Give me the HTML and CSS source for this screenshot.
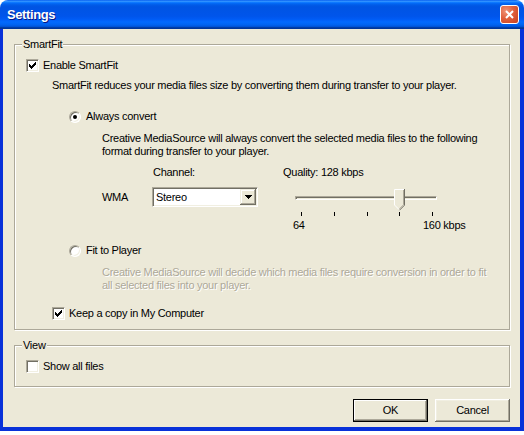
FILE: index.html
```html
<!DOCTYPE html>
<html lang="en">
<head>
  <meta charset="UTF-8" />
  <meta name="viewport" content="width=device-width, initial-scale=1.0"/>
  <title>Settings</title>
  <link rel="stylesheet" href="styles.css">
</head>
<body>

  <div class="window">
    <div class="titlebar">
      <span class="title">Settings</span>
      <button class="close" aria-label="Close">
        <svg width="9" height="9" viewBox="0 0 9 9"><path d="M1 1L8 8M8 1L1 8" stroke="#fff" stroke-width="2"/></svg>
      </button>
    </div>

    <div class="client">
      <div class="group smartfit">
        <div class="group-title">SmartFit</div>
        <label class="option">
          <span class="check"><svg width="7" height="7" viewBox="0 0 7 7"><path d="M0 2h1v3H0zM1 3h1v3H1zM2 4h1v3H2zM3 3h1v3H3zM4 2h1v3H4zM5 1h1v3H5zM6 0h1v3H6z"/></svg></span>
          Enable SmartFit
        </label>

        <div class="indent">
          <p class="note intro">SmartFit reduces your media files size by converting them during transfer to your player.</p>

          <label class="option radio-row always">
            <span class="radio on"></span>
            Always convert
          </label>
          <div class="sub">
            <p class="note convert">Creative MediaSource will always convert the selected media files to the following<br>format during transfer to your player.</p>

            <div class="format">
              <div class="channel">
                <div class="field-label channel-label">Channel:</div>
                <div class="channel-row">
                  <span class="codec">WMA</span>
                  <div class="combo">
                    <span>Stereo</span>
                    <span class="combo-btn"><svg width="7" height="4" viewBox="0 0 7 4"><path d="M0 0h7v1H0zM1 1h5v1H1zM2 2h3v1H2zM3 3h1v1H3z"/></svg></span>
                  </div>
                </div>
              </div>

              <div class="quality">
                <div class="field-label">Quality: 128 kbps</div>
                <div class="slider">
                  <div class="track"></div>
                  <svg class="thumb" width="11" height="22" viewBox="0 0 11 22">
                    <path d="M0 0H11V16L5.5 21.5L0 16Z" fill="#ece9d8"/>
                    <path d="M0.5 16V0.5H10" fill="none" stroke="#fff"/>
                    <path d="M0.5 16L5 20.5" fill="none" stroke="#fff"/>
                    <path d="M10.5 0V16.2L5.5 21.2" fill="none" stroke="#716f64"/>
                    <path d="M9.5 1V15.8L5.5 19.8" fill="none" stroke="#aca899"/>
                  </svg>
                </div>
                <div class="ticks"><i></i><i></i><i></i><i></i><i></i></div>
                <div class="scale"><span>64</span><span>160 kbps</span></div>
              </div>
            </div>
          </div>

          <label class="option radio-row fit">
            <span class="radio"></span>
            Fit to Player
          </label>
          <div class="sub">
            <p class="note disabled">Creative MediaSource will decide which media files require conversion in order to fit<br>all selected files into your player.</p>
          </div>

          <label class="option keep">
            <span class="check"><svg width="7" height="7" viewBox="0 0 7 7"><path d="M0 2h1v3H0zM1 3h1v3H1zM2 4h1v3H2zM3 3h1v3H3zM4 2h1v3H4zM5 1h1v3H5zM6 0h1v3H6z"/></svg></span>
            Keep a copy in My Computer
          </label>
        </div>
      </div>

      <div class="group view">
        <div class="group-title">View</div>
        <label class="option">
          <span class="check"></span>
          Show all files
        </label>
      </div>

      <div class="buttons">
        <button class="btn default">OK</button>
        <button class="btn">Cancel</button>
      </div>
    </div>
  </div>

</body>
</html>
```

FILE: styles.css
```css
body {
  margin: 0;
  background: #fff;
  font-family: "Liberation Sans", Arial, sans-serif;
  font-size: 11px;
  line-height: 13px;
  letter-spacing: -0.27px;
  color: #000;
}

.window {
  width: 524px;
  height: 435px;
}

/* XP caption */
.titlebar {
  height: 29px;
  box-sizing: border-box;
  display: flex;
  align-items: center;
  justify-content: space-between;
  padding: 0 5px 0 7px;
  border-radius: 8px 8px 0 0;
  background: linear-gradient(180deg, #0058ee 0%, #3593ff 4%, #288eff 6%, #127dff 8%, #036ffc 10%, #0262ee 14%, #0057e5 20%, #0054e3 24%, #0055eb 56%, #005bf5 66%, #026afe 76%, #0062ef 86%, #0052d6 92%, #0040ab 94%, #003092 100%);
}

.title {
  color: #fff;
  font-weight: bold;
  font-size: 13px;
  letter-spacing: -0.4px;
  text-shadow: 1px 1px #0a1883;
}

.close {
  width: 19px;
  height: 19px;
  padding: 0;
  box-sizing: border-box;
  border: 1px solid #fff;
  border-radius: 3px;
  background: radial-gradient(circle at 30% 30%, #f09478 0%, #e0603c 45%, #c8401e 100%);
  display: flex;
  align-items: center;
  justify-content: center;
}

.client {
  height: 402px;
  box-sizing: border-box;
  border: solid #0831d9;
  border-width: 0 4px 4px 3px;
  background: #ece9d8;
  padding: 15px 10px 0 11px;
}

/* etched group box */
.group {
  border: 1px solid #aca899;
  box-shadow: inset 1px 1px #fff, 1px 1px #fff;
  padding-left: 11px;
}

.smartfit {
  padding-bottom: 9px;
}

.view {
  margin-top: 15px;
  padding-bottom: 13px;
}

.group-title {
  width: fit-content;
  margin: -7px 0 0 -4px;
  padding: 0 1px;
  background: #ece9d8;
}

.option {
  display: flex;
  align-items: center;
  height: 13px;
  margin-top: 8px;
}

.check {
  flex: none;
  width: 13px;
  height: 13px;
  box-sizing: border-box;
  border: 1px solid;
  border-color: #aca899 #fff #fff #aca899;
  box-shadow: inset 1px 1px #716f64, inset -1px -1px #f1efe2;
  background: #fff;
  margin-right: 4px;
  display: flex;
  align-items: center;
  justify-content: center;
}

.radio {
  flex: none;
  width: 12px;
  height: 12px;
  box-sizing: border-box;
  border-radius: 50%;
  border: 1px solid;
  border-color: #aca899 #fff #fff #aca899;
  box-shadow: inset 1px 1px #716f64, inset -1px -1px #f1efe2;
  background: #fff;
  margin-right: 5px;
  display: flex;
  align-items: center;
  justify-content: center;
}

.radio.on::after {
  content: "";
  width: 4px;
  height: 4px;
  border-radius: 50%;
  background: #000;
}

.indent {
  margin-left: 26px;
}

.note {
  margin: 0;
}

.intro {
  margin-top: 7px;
}

.radio-row {
  margin-left: 17px;
}

.always {
  margin-top: 18px;
}

.sub {
  margin-left: 50px;
}

.convert {
  margin-top: 9px;
}

.format {
  display: flex;
  margin-top: 8px;
}

.channel {
  width: 181px;
}

.field-label {
  height: 13px;
}

.channel-label {
  margin-left: 51px;
}

.channel-row {
  display: flex;
  align-items: center;
  height: 20px;
  margin-top: 8px;
}

.codec {
  width: 50px;
}

.combo {
  width: 106px;
  height: 20px;
  box-sizing: border-box;
  border: 1px solid;
  border-color: #aca899 #fff #fff #aca899;
  box-shadow: inset 1px 1px #716f64, inset -1px -1px #f1efe2;
  background: #fff;
  padding: 1px 1px 1px 3px;
  display: flex;
  align-items: center;
  justify-content: space-between;
}

.combo-btn {
  width: 16px;
  height: 16px;
  background: #ece9d8;
  box-shadow: inset -1px -1px #716f64, inset 1px 1px #f1efe2, inset -2px -2px #aca899, inset 2px 2px #fff;
  display: flex;
  align-items: center;
  justify-content: center;
}

.quality {
  width: 190px;
}

.slider {
  position: relative;
  height: 25px;
  margin-top: 8px;
}

.track {
  position: absolute;
  left: 12px;
  top: 9px;
  width: 142px;
  height: 4px;
  box-sizing: border-box;
  border: 1px solid;
  border-color: #aca899 #fff #fff #aca899;
  box-shadow: inset 1px 1px #716f64;
  background: #ece9d8;
}

.thumb {
  position: absolute;
  left: 111px;
  top: 2px;
}

.ticks {
  display: flex;
  justify-content: space-between;
  width: 132px;
  height: 4px;
  margin-left: 18px;
}

.ticks i {
  width: 1px;
  height: 4px;
  background: #000;
}

.scale {
  display: flex;
  margin: 3px 0 0 10px;
}

.scale span:first-child {
  width: 130px;
}

.fit {
  margin-top: 12px;
}

.disabled {
  margin-top: 9px;
  color: #aca899;
  text-shadow: 1px 1px #fff;
}

.keep {
  margin-top: 15px;
}

.buttons {
  display: flex;
  justify-content: flex-end;
  gap: 7px;
  margin-top: 12px;
}

.btn {
  width: 75px;
  height: 23px;
  padding: 0;
  border: none;
  background: #ece9d8;
  font: inherit;
  letter-spacing: inherit;
  color: #000;
  box-shadow: inset -1px -1px #716f64, inset 1px 1px #fff, inset -2px -2px #aca899, inset 2px 2px #f1efe2;
}

.btn.default {
  border: 1px solid #000;
  box-shadow: inset -1px -1px #716f64, inset 1px 1px #fff, inset -2px -2px #aca899;
}
```
